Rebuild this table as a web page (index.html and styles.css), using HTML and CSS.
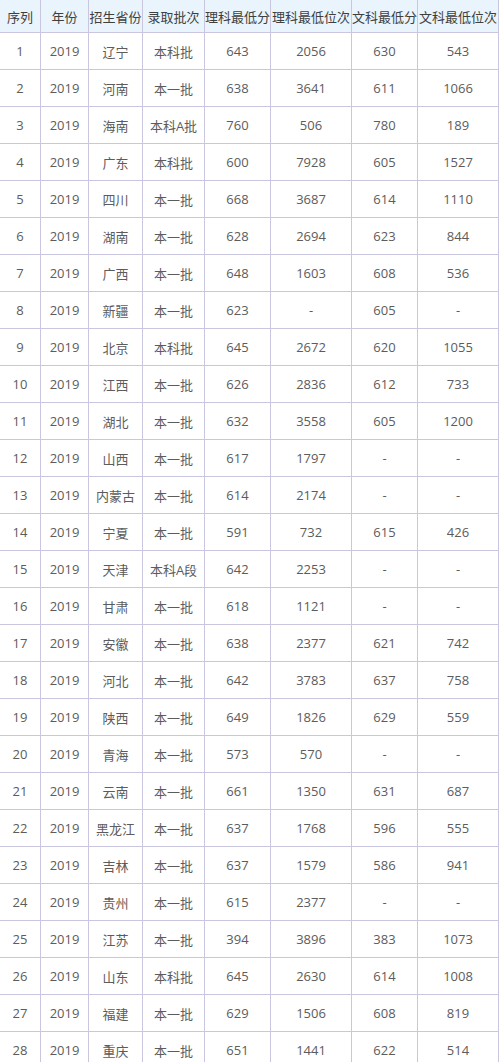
FILE: index.html
```html
<!DOCTYPE html>
<html lang="zh-CN">
<head>
<meta charset="utf-8">
<title>录取分数</title>
<link rel="stylesheet" href="styles.css">
</head>
<body>
<table class="scores">
  <thead>
    <tr>
      <th class="c1">序列</th><th class="c2">年份</th><th class="c3">招生省份</th><th class="c4">录取批次</th><th class="c5">理科最低分</th><th class="c6">理科最低位次</th><th class="c7">文科最低分</th><th class="c8">文科最低位次</th>
    </tr>
  </thead>
  <tbody>
    <tr><td>1</td><td>2019</td><td>辽宁</td><td>本科批</td><td>643</td><td>2056</td><td>630</td><td>543</td></tr>
    <tr><td>2</td><td>2019</td><td>河南</td><td>本一批</td><td>638</td><td>3641</td><td>611</td><td>1066</td></tr>
    <tr><td>3</td><td>2019</td><td>海南</td><td>本科A批</td><td>760</td><td>506</td><td>780</td><td>189</td></tr>
    <tr><td>4</td><td>2019</td><td>广东</td><td>本科批</td><td>600</td><td>7928</td><td>605</td><td>1527</td></tr>
    <tr><td>5</td><td>2019</td><td>四川</td><td>本一批</td><td>668</td><td>3687</td><td>614</td><td>1110</td></tr>
    <tr><td>6</td><td>2019</td><td>湖南</td><td>本一批</td><td>628</td><td>2694</td><td>623</td><td>844</td></tr>
    <tr><td>7</td><td>2019</td><td>广西</td><td>本一批</td><td>648</td><td>1603</td><td>608</td><td>536</td></tr>
    <tr><td>8</td><td>2019</td><td>新疆</td><td>本一批</td><td>623</td><td>-</td><td>605</td><td>-</td></tr>
    <tr><td>9</td><td>2019</td><td>北京</td><td>本科批</td><td>645</td><td>2672</td><td>620</td><td>1055</td></tr>
    <tr><td>10</td><td>2019</td><td>江西</td><td>本一批</td><td>626</td><td>2836</td><td>612</td><td>733</td></tr>
    <tr><td>11</td><td>2019</td><td>湖北</td><td>本一批</td><td>632</td><td>3558</td><td>605</td><td>1200</td></tr>
    <tr><td>12</td><td>2019</td><td>山西</td><td>本一批</td><td>617</td><td>1797</td><td>-</td><td>-</td></tr>
    <tr><td>13</td><td>2019</td><td>内蒙古</td><td>本一批</td><td>614</td><td>2174</td><td>-</td><td>-</td></tr>
    <tr><td>14</td><td>2019</td><td>宁夏</td><td>本一批</td><td>591</td><td>732</td><td>615</td><td>426</td></tr>
    <tr><td>15</td><td>2019</td><td>天津</td><td>本科A段</td><td>642</td><td>2253</td><td>-</td><td>-</td></tr>
    <tr><td>16</td><td>2019</td><td>甘肃</td><td>本一批</td><td>618</td><td>1121</td><td>-</td><td>-</td></tr>
    <tr><td>17</td><td>2019</td><td>安徽</td><td>本一批</td><td>638</td><td>2377</td><td>621</td><td>742</td></tr>
    <tr><td>18</td><td>2019</td><td>河北</td><td>本一批</td><td>642</td><td>3783</td><td>637</td><td>758</td></tr>
    <tr><td>19</td><td>2019</td><td>陕西</td><td>本一批</td><td>649</td><td>1826</td><td>629</td><td>559</td></tr>
    <tr><td>20</td><td>2019</td><td>青海</td><td>本一批</td><td>573</td><td>570</td><td>-</td><td>-</td></tr>
    <tr><td>21</td><td>2019</td><td>云南</td><td>本一批</td><td>661</td><td>1350</td><td>631</td><td>687</td></tr>
    <tr><td>22</td><td>2019</td><td>黑龙江</td><td>本一批</td><td>637</td><td>1768</td><td>596</td><td>555</td></tr>
    <tr><td>23</td><td>2019</td><td>吉林</td><td>本一批</td><td>637</td><td>1579</td><td>586</td><td>941</td></tr>
    <tr><td>24</td><td>2019</td><td>贵州</td><td>本一批</td><td>615</td><td>2377</td><td>-</td><td>-</td></tr>
    <tr><td>25</td><td>2019</td><td>江苏</td><td>本一批</td><td>394</td><td>3896</td><td>383</td><td>1073</td></tr>
    <tr><td>26</td><td>2019</td><td>山东</td><td>本科批</td><td>645</td><td>2630</td><td>614</td><td>1008</td></tr>
    <tr><td>27</td><td>2019</td><td>福建</td><td>本一批</td><td>629</td><td>1506</td><td>608</td><td>819</td></tr>
    <tr><td>28</td><td>2019</td><td>重庆</td><td>本一批</td><td>651</td><td>1441</td><td>622</td><td>514</td></tr>
  </tbody>
</table>
</body>
</html>
```
FILE: styles.css
```css
html, body {
  margin: 0;
  padding: 0;
  background: #ffffff;
}

.scores {
  table-layout: fixed;
  border-collapse: separate;
  border-spacing: 0;
  width: 499px;
  font-family: "Open Sans", "Noto Sans CJK SC", sans-serif;
  font-size: 13px;
  color: #5c5c5c;
}

.scores th,
.scores td {
  box-sizing: border-box;
  padding: 0;
  text-align: center;
  vertical-align: middle;
  border-right: 1px solid #c9c6e0;
  border-bottom: 1px solid #c9c6e0;
  white-space: nowrap;
  overflow: hidden;
}

.scores th {
  height: 33px;
  background: #e9f4fc;
  font-weight: normal;
  color: #3f3f3f;
}

.scores td {
  height: 37px;
}

.c1 { width: 41px; }
.c2 { width: 48px; }
.c3 { width: 54px; }
.c4 { width: 62px; }
.c5 { width: 66px; }
.c6 { width: 81px; }
.c7 { width: 66px; }
.c8 { width: 81px; }
```
